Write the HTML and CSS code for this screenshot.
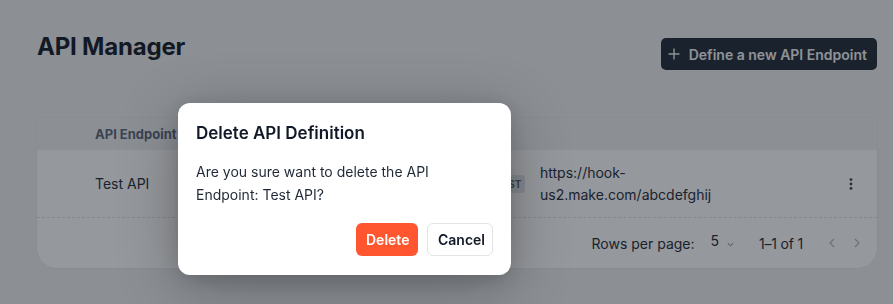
FILE: index.html
```html
<!DOCTYPE html>
<html lang="en">
<head>
<meta charset="utf-8">
<title>API Manager</title>
<link rel="stylesheet" href="styles.css">
</head>
<body>
<div class="page">
  <header class="top">
    <h1 class="title">API Manager</h1>
    <button class="btn-primary" type="button">
      <svg class="plus" width="12" height="12" viewBox="0 0 12 12" aria-hidden="true"><path d="M6 0.5v11M0.5 6h11" stroke="currentColor" stroke-width="1.4" fill="none"/></svg>
      <span>Define a new API Endpoint</span>
    </button>
  </header>

  <section class="card">
    <div class="thead">
      <div class="th">API Endpoint</div>
      <div class="th">URI</div>
      <div class="th"></div>
      <div class="th"></div>
    </div>
    <div class="trow">
      <div class="cell name">Test API</div>
      <div class="cell"><span class="badge">POST</span></div>
      <div class="cell url">https://hook-<br>us2.make.com/abcdefghij</div>
      <div class="cell act">
        <svg width="4" height="12" viewBox="0 0 4 12" aria-hidden="true"><circle cx="2" cy="1.6" r="1.4" fill="currentColor"/><circle cx="2" cy="6" r="1.4" fill="currentColor"/><circle cx="2" cy="10.4" r="1.4" fill="currentColor"/></svg>
      </div>
    </div>
    <div class="tfoot">
      <span class="rpp">Rows per page:</span>
      <span class="select">5
        <svg width="7" height="5" viewBox="0 0 7 5" aria-hidden="true"><path d="M0.8 1.2 3.5 3.8 6.2 1.2" stroke="currentColor" stroke-width="1" fill="none"/></svg>
      </span>
      <span class="count">1–1 of 1</span>
      <span class="nav">
        <svg width="6" height="10" viewBox="0 0 6 10" aria-hidden="true"><path d="M5 1 1 5l4 4" stroke="currentColor" stroke-width="1.2" fill="none"/></svg>
      </span>
      <span class="nav">
        <svg width="6" height="10" viewBox="0 0 6 10" aria-hidden="true"><path d="M1 1l4 4-4 4" stroke="currentColor" stroke-width="1.2" fill="none"/></svg>
      </span>
    </div>
  </section>
</div>

<div class="overlay"></div>

<div class="dialog" role="dialog">
  <h2 class="d-title">Delete API Definition</h2>
  <p class="d-body">Are you sure want to delete the API Endpoint: Test API?</p>
  <div class="d-actions">
    <button class="btn-danger" type="button">Delete</button>
    <button class="btn-outline" type="button">Cancel</button>
  </div>
</div>
</body>
</html>
```

FILE: styles.css
```css
* { box-sizing: border-box; }
html, body { margin: 0; padding: 0; }
body {
  width: 893px;
  height: 304px;
  overflow: hidden;
  background: #eef0f2;
  font-family: Inter, "Noto Sans", sans-serif;
  color: #1f2937;
}
.page {
  padding: 32px 16px 0 37px;
}
.top {
  display: flex;
  justify-content: space-between;
  align-items: flex-start;
  height: 86px;
}
.title {
  margin: 0;
  font-size: 24px;
  line-height: 30px;
  font-weight: 700;
  color: #111827;
  letter-spacing: -0.2px;
}
.btn-primary {
  margin-top: 6px;
  display: flex;
  align-items: center;
  gap: 9px;
  height: 32px;
  padding: 0 10px 0 7px;
  border: 0;
  border-radius: 5px;
  background: #1f2937;
  color: #f3f4f6;
  font-family: Inter, sans-serif;
  font-size: 14px;
  font-weight: 600;
}
.plus { display: block; }

.card {
  width: 840px;
  height: 150px;
  background: #ffffff;
  border-radius: 4px 4px 20px 20px;
  box-shadow: 0 0 0 1px rgba(0,0,0,0.02);
  overflow: hidden;
}
.thead, .trow {
  display: grid;
  grid-template-columns: 395px 50px 1fr 40px;
  padding: 0 6px 0 58px;
}
.thead {
  height: 32px;
  align-items: center;
  background: #eff1f3;
}
.th {
  font-size: 13px;
  font-weight: 700;
  color: #5a6577;
}
.trow {
  height: 68px;
  align-items: center;
  border-bottom: 1px dashed #dfe2e6;
}
.cell { font-size: 14px; color: #1f2937; }
.badge {
  display: inline-block;
  padding: 4px 4px;
  border-radius: 3px;
  background: #e3e6ea;
  color: #5f6877;
  font-size: 10px;
  line-height: 10px;
  font-weight: 700;
}
.url { line-height: 22px; }
.act {
  display: flex;
  justify-content: center;
  color: #374151;
}
.tfoot {
  height: 50px;
  display: flex;
  align-items: center;
  justify-content: flex-end;
  padding-right: 8px;
  font-size: 14px;
  color: #1f2937;
}
.select {
  display: flex;
  align-items: center;
  gap: 8px;
  margin-left: 16px;
  margin-top: -6px;
}
.select svg { margin-top: 8px; color: #6b7280; }
.count { margin-left: 25px; margin-right: 16px; letter-spacing: -0.2px; }
.nav {
  width: 24px;
  height: 24px;
  display: flex;
  align-items: center;
  justify-content: center;
  color: #b3b8c0;
  margin-left: 1px;
}

.overlay {
  position: fixed;
  inset: 0;
  background: rgba(20, 26, 36, 0.45);
}

.dialog {
  position: fixed;
  left: 178px;
  top: 103px;
  width: 333px;
  height: 172px;
  padding: 18px;
  background: #ffffff;
  border-radius: 12px;
  box-shadow: 0 12px 60px rgba(0,0,0,0.3), 0 4px 16px rgba(0,0,0,0.12);
}
.d-title {
  margin: 0;
  font-size: 17px;
  line-height: 24px;
  font-weight: 600;
  color: #111827;
}
.d-body {
  margin: 15px 0 0 0;
  font-size: 14px;
  line-height: 23px;
  color: #1f2937;
}
.d-actions {
  display: flex;
  justify-content: flex-end;
  gap: 9px;
  margin-top: 17px;
}
.btn-danger, .btn-outline {
  height: 33px;
  border-radius: 6px;
  font-family: Inter, sans-serif;
  font-size: 14px;
  font-weight: 600;
  padding: 0 10px;
}
.btn-danger {
  border: 0;
  background: #ff5630;
  color: #ffffff;
  width: 62px;
}
.btn-outline {
  border: 1px solid #e2e4e8;
  background: #ffffff;
  color: #111827;
  width: 66px;
}
```
